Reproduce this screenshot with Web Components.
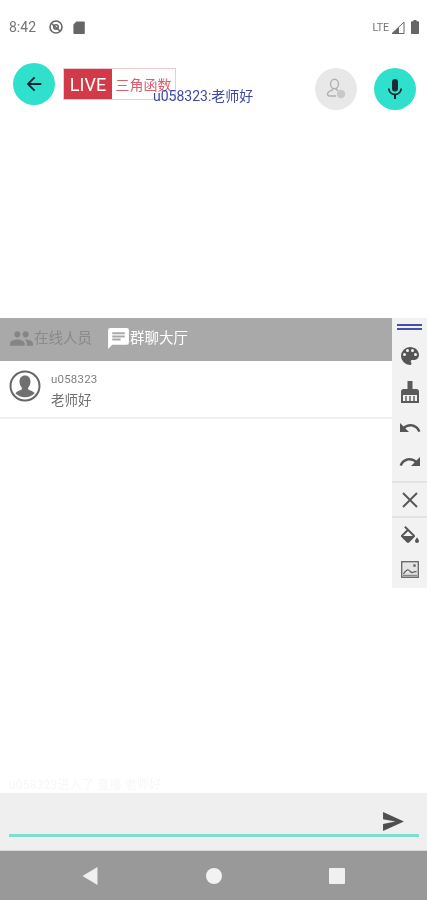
<!DOCTYPE html>
<html>
<head>
<meta charset="utf-8">
<style>
  html, body { margin: 0; padding: 0; background: #fff; }
  body { font-family: Roboto, "Noto Sans CJK SC", sans-serif; width: 427px; height: 900px; overflow: hidden; }
</style>
</head>
<body>
<live-room>
  <status-bar slot="status"></status-bar>
  <room-header slot="header"></room-header>
  <chat-tabs slot="tabs"></chat-tabs>
  <chat-item slot="list" user="u058323" text="老师好"></chat-item>
  <draw-tools slot="tools"></draw-tools>
  <chat-input slot="input"></chat-input>
  <nav-bar slot="nav"></nav-bar>
</live-room>

<script>
function define(name, html) {
  customElements.define(name, class extends HTMLElement {
    constructor() {
      super();
      let shadow = this.attachShadow({ mode: "open" });
      shadow.innerHTML = html;
    }
  });
}

define("live-room", `
<style>
  :host { display: flex; flex-direction: column; position: relative; width: 427px; height: 900px; filter: blur(.5px); }
  .board { height: 204px; flex: none; }
  .list { flex: 1; position: relative; }
  .toast { position: absolute; left: 9px; bottom: 1px; font-size: 12px; letter-spacing: .2px; color: #f7f7f7; }
  .tools { position: absolute; right: 0; top: 318px; }
</style>
<slot name="status"></slot>
<slot name="header"></slot>
<div class="board"></div>
<slot name="tabs"></slot>
<div class="list">
  <slot name="list"></slot>
  <div class="toast">u058323进入了 直播 老师好</div>
</div>
<slot name="input"></slot>
<slot name="nav"></slot>
<div class="tools"><slot name="tools"></slot></div>
`);

define("status-bar", `
<style>
  :host { display: flex; align-items: center; height: 54px; flex: none; padding: 0 8px 0 9px; box-sizing: border-box; color: #757575; }
  .time { font-size: 14px; margin-right: 13px; }
  svg { display: block; }
  .sd { margin-left: 10px; }
  .gap { flex: 1; }
  .lte { font-size: 10.5px; margin-right: 3px; }
  .bat { margin-left: 6px; }
</style>
<span class="time">8:42</span>
<svg width="14" height="14" viewBox="0 0 14 14" fill="none" stroke="#666" stroke-width="1.6"><circle cx="7" cy="7" r="6"/><circle cx="7" cy="7" r="2.2"/><path d="M2.5 3.5 11 11"/></svg>
<svg class="sd" width="12" height="13" viewBox="0 0 12 13"><path d="M3.5 .5H11a.8.8 0 0 1 .8.8v10.9a.8.8 0 0 1-.8.8H1.2a.8.8 0 0 1-.8-.8V3.6z" fill="#666"/></svg>
<span class="gap"></span>
<span class="lte">LTE</span>
<svg width="13" height="13" viewBox="0 0 13 13"><path d="M0 12.5 12 1v11.5z" fill="none" stroke="#666" stroke-width="1"/><path d="M0 12.5 7 6v6.5z" fill="#666"/></svg>
<svg class="bat" width="8" height="14" viewBox="0 0 8 14"><path d="M2.5 0h3v1.2h1.800a.7.7 0 0 1 .7.7v11.400a.7.7 0 0 1-.7.7H.7a.7.7 0 0 1-.7-.7V1.900a.7.7 0 0 1 .7-.7h1.800z" fill="#666"/></svg>
`);

define("room-header", `
<style>
  :host { display: flex; align-items: flex-start; height: 60px; flex: none; padding: 9px 11px 0 13px; box-sizing: border-box; position: relative; }
  .fab { width: 42px; height: 42px; border-radius: 50%; background: #2fe0cd; display: flex; align-items: center; justify-content: center; flex: none; }
  .live { display: flex; height: 32px; width: 113px; box-sizing: border-box; border: 1px solid #eecbcf; margin-left: 8px; margin-top: 5px; }
  .live b { width: 48px; background: #d23a4a; color: #fff; font-weight: 400; font-size: 18px; display: flex; align-items: center; justify-content: center; }
  .live span { flex: 1; color: #d8606c; font-size: 14px; display: flex; align-items: center; justify-content: center; white-space: nowrap; }
  .danmu { position: absolute; left: 153px; top: 31px; font-size: 14px; color: #3f48a8; white-space: nowrap; }
  .gap { flex: 1; }
  .guest { background: #e8e8e8; margin: 5px 17px 0 0; }
  .mic { margin-top: 5px; }
</style>
<div class="fab"><svg width="22" height="22" viewBox="0 0 24 24"><path d="M20 11H7.800l5.600-5.600L12 4l-8 8 8 8 1.400-1.400L7.800 13H20z" fill="#123"/></svg></div>
<div class="live"><b>LIVE</b><span>三角函数</span></div>
<div class="danmu">u058323:老师好</div>
<span class="gap"></span>
<div class="fab guest"><svg width="24" height="24" viewBox="0 0 24 24" fill="none" stroke="#b0b0b0" stroke-width="1.400"><ellipse cx="10.500" cy="7" rx="4" ry="4.800"/><path d="M8.500 11.500v1.300c-2.500 1-5 2-5 4.300 0 1.200 1 1.900 2.200 1.900h6.300M12.500 11.500v1.300l1.500.7"/><circle cx="17" cy="17" r="4.200" fill="#c8c8c8" stroke="none"/></svg></div>
<div class="fab mic"><svg width="24" height="24" viewBox="0 0 24 24"><path d="M12 14.500a3 3 0 0 0 3-3V5a3 3 0 0 0-6 0v6.500a3 3 0 0 0 3 3zm5.300-3c0 3-2.500 5-5.300 5s-5.300-2-5.300-5H5c0 3.400 2.700 6.200 6 6.700V22h2v-3.800c3.300-.5 6-3.300 6-6.700z" fill="#1c2b33"/></svg></div>
`);

define("chat-tabs", `
<style>
  :host { display: flex; align-items: center; height: 43px; flex: none; background: #a9a9a9; padding: 0 0 3px 9px; box-sizing: border-box; font-size: 14.500px; }
  .tab { display: flex; align-items: center; white-space: nowrap; }
  .tab span { margin-top: -3px; }
  .off { color: #8a8a8a; width: 97px; }
  .on { color: #fff; }
  svg { display: block; flex: none; }
</style>
<div class="tab off"><svg width="25" height="25" viewBox="0 0 24 24"><path d="M16 11c1.700 0 3-1.300 3-3s-1.300-3-3-3-3 1.300-3 3 1.300 3 3 3zm-8 0c1.700 0 3-1.300 3-3S9.700 5 8 5 5 6.300 5 8s1.300 3 3 3zm0 2c-2.300 0-7 1.200-7 3.500V19h14v-2.500C15 14.200 10.300 13 8 13zm8 0h-1c1.200.8 2 2 2 3.500V19h6v-2.500c0-2.300-4.700-3.500-7-3.500z" fill="#858585"/></svg><span>在线人员</span></div>
<div class="tab on"><svg width="25" height="25" viewBox="0 0 24 24" style="margin-right:-1px"><path d="M20 2H4a2 2 0 0 0-2 2v18l4-4h14a2 2 0 0 0 2-2V4a2 2 0 0 0-2-2zM6 9h12v2H6zm8 5H6v-2h8zm4-6H6V6h12z" fill="#fff"/></svg><span>群聊大厅</span></div>
`);

customElements.define("chat-item", class extends HTMLElement {
  constructor() {
    super();
    let shadow = this.attachShadow({ mode: "open" });
    shadow.innerHTML = `
<style>
  :host { display: flex; height: 58px; box-sizing: border-box; border-bottom: 2px solid #efefef; padding: 9px 0 0 9px; }
  .who { margin-left: 10px; }
  .name { font-size: 11.500px; color: #808080; line-height: 14px; margin-top: 2px; letter-spacing: .2px; }
  .msg { font-size: 13.500px; color: #707070; line-height: 18px; margin-top: 5px; }
  svg { display: block; flex: none; }
</style>
<svg width="32" height="32" viewBox="0 0 32 32"><circle cx="16" cy="16" r="14.500" fill="#fff" stroke="#666" stroke-width="2"/><path d="M16 5.500c3.300 0 5.500 2.600 5.500 6 0 2.600-1 4.700-2.300 6v2c2.300 1 5 1.800 6.500 3.800a14 14 0 0 1-19.400 0c1.500-2 4.200-2.800 6.500-3.800v-2c-1.300-1.300-2.300-3.400-2.300-6 0-3.400 2.200-6 5.500-6z" fill="#707070"/></svg>
<div class="who"><div class="name"></div><div class="msg"></div></div>`;
    shadow.querySelector(".name").textContent = this.getAttribute("user");
    shadow.querySelector(".msg").textContent = this.getAttribute("text");
  }
});

define("draw-tools", `
<style>
  :host { display: flex; flex-direction: column; width: 35px; height: 270px; background: #f2f2f2; align-items: center; }
  .grip { height: 21px; width: 100%; box-sizing: border-box; padding-top: 6px; display: flex; flex-direction: column; align-items: center; gap: 2px; flex: none; }
  .grip i { display: block; width: 25px; height: 2px; background: #4450b0; }
  .btn { width: 100%; display: flex; align-items: center; justify-content: center; flex: none; }
  hr { width: 100%; height: 2px; margin: 0; border: 0; background: #e2e2e2; flex: none; }
  svg { display: block; }
</style>
<div class="grip"><i></i><i></i></div>
<div class="btn" style="height:34px"><svg width="24" height="24" viewBox="0 0 24 24"><path d="M12 3a9 9 0 0 0 0 18c.8 0 1.500-.7 1.500-1.500 0-.4-.1-.7-.4-1-.3-.3-.4-.6-.4-1 0-.8.7-1.500 1.500-1.500H16c2.800 0 5-2.200 5-5 0-4.400-4-8-9-8zm-5.500 9a1.500 1.500 0 1 1 0-3 1.500 1.500 0 0 1 0 3zm3-4a1.500 1.500 0 1 1 0-3 1.500 1.500 0 0 1 0 3zm5 0a1.500 1.500 0 1 1 0-3 1.500 1.500 0 0 1 0 3zm3 4a1.500 1.500 0 1 1 0-3 1.500 1.500 0 0 1 0 3z" fill="#555"/></svg></div>
<div class="btn" style="height:40px"><svg style="margin-top:-3px" width="22" height="24" viewBox="0 0 22 24"><path d="M8.500 1h5v8h4c1.500 0 2.500 1 2.500 2.500V23H2V11.500C2 10 3 9 4.500 9h4z" fill="#5a5a5a"/><path d="M4 15h14v6H4z" fill="#f2f2f2"/><path d="M7 16v5M11 16v5M15 16v5" stroke="#5a5a5a" stroke-width="1.400"/></svg></div>
<div class="btn" style="height:30px"><svg width="24" height="24" viewBox="0 0 24 24"><path d="M12.500 8c-2.700 0-5 1-6.900 2.600L2 7v9h9l-3.600-3.600c1.400-1.200 3.200-1.900 5.100-1.900 3.500 0 6.500 2.300 7.600 5.500l2.400-.8C21 11 17.100 8 12.500 8z" fill="#555"/></svg></div>
<div class="btn" style="height:38px"><svg width="24" height="24" viewBox="0 0 24 24"><path d="M18.400 10.600C16.500 9 14.200 8 11.500 8 6.900 8 3 11 1.600 15.200l2.400.8c1.100-3.200 4.100-5.500 7.500-5.500 2 0 3.700.7 5.100 1.900L13 16h9V7z" fill="#555"/></svg></div>
<hr>
<div class="btn" style="height:33px"><svg width="24" height="24" viewBox="0 0 24 24"><path d="M5 5l14 14M19 5 5 19" stroke="#555" stroke-width="1.800"/></svg></div>
<hr>
<div class="btn" style="height:34px"><svg style="margin-top:6px" width="24" height="24" viewBox="0 0 24 24"><path d="M16.600 9 7.600 0 6.200 1.400l2.400 2.400-5.200 5.200c-.6.600-.6 1.500 0 2.100l5.500 5.500c.3.300.7.400 1.100.4s.8-.1 1.100-.4l5.500-5.500c.6-.6.600-1.500 0-2.100zM5.200 10 10 5.200 14.800 10zM19 11.500s-2 2.200-2 3.500a2 2 0 0 0 4 0c0-1.300-2-3.500-2-3.500z" fill="#555"/></svg></div>
<div class="btn" style="height:34px"><svg width="18" height="17" viewBox="0 0 18 17"><rect x=".7" y=".7" width="16.600" height="15.600" fill="#e4e4e4" stroke="#666" stroke-width="1.300"/><path d="M2.500 13c2-3 3-5 5-4s2 3 4 2.500 2.500-1 4-1" fill="none" stroke="#666" stroke-width="1.300"/><path d="M2 14.500h14" stroke="#888" stroke-width="1.500"/><circle cx="13.500" cy="4.500" r="1.500" fill="#777"/></svg></div>
`);

define("chat-input", `
<style>
  :host { display: block; height: 58px; flex: none; background: #efefef; position: relative; box-sizing: border-box; padding: 41px 8px 0 9px; border-bottom: 1px solid #d8d8d8; }
  .line { height: 3px; background: #7fdccf; }
  svg { position: absolute; right: 23px; top: 19px; display: block; }
</style>
<div class="line"></div>
<svg width="21" height="19" viewBox="0 0 22 20"><path d="M0 0v7.500l13 2.500L0 12.500V20l22-10z" fill="#4f4f4f"/></svg>
`);

define("nav-bar", `
<style>
  :host { display: flex; height: 49px; flex: none; background: #999; align-items: center; justify-content: space-between; padding: 0 82px; box-sizing: border-box; }
  svg { display: block; }
</style>
<svg width="16" height="18" viewBox="0 0 16 18"><path d="M15.500 0v18L.5 9z" fill="#f0f0f0"/></svg>
<svg width="16" height="16" viewBox="0 0 16 16"><circle cx="8" cy="8" r="8" fill="#f2f2f2"/></svg>
<svg width="16" height="16" viewBox="0 0 16 16"><rect width="16" height="16" rx="1" fill="#f0f0f0"/></svg>
`);
</script>
</body>
</html>
